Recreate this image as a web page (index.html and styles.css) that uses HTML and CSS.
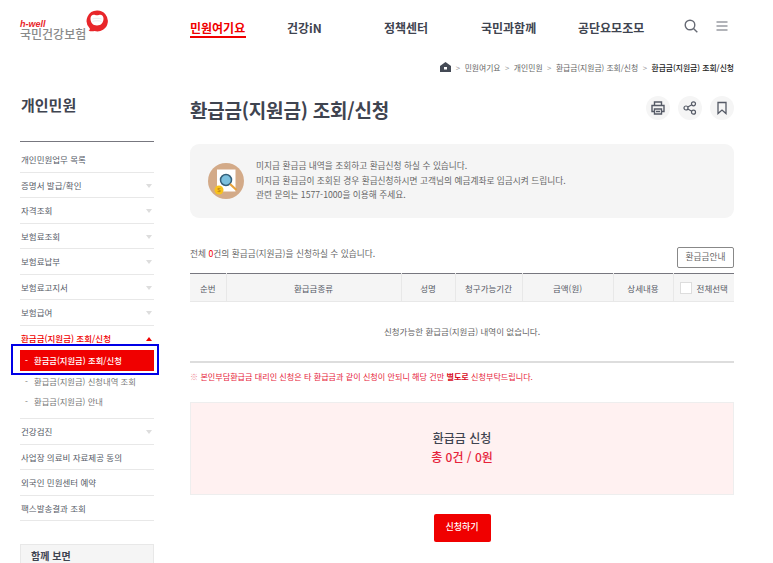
FILE: index.html
```html
<!DOCTYPE html>
<html lang="ko">
<head>
  <meta charset="UTF-8">
  <title>환급금(지원금) 조회/신청</title>
  <link rel="stylesheet" href="styles.css">
</head>
<body>
<div class="page">

  <header class="top">
    <a class="logo">
      <span class="logo-text">
        <em>h-well</em>
        <b>국민건강보험</b>
      </span>
      <svg class="logo-mark" width="22" height="22" viewBox="0 0 22 22">
        <path d="M11.5 0.5a10.500 10.500 0 1 1-3 20.600c-2 .4-4 .3-6-.3 1-.6 1.500-1.300 1.300-2.300a10.500 10.500 0 0 1 7.700-18z" fill="#e8262a"/>
        <path d="M4.500 8.500c0-2.300 1.500-3.800 3.200-3.800 1 0 1.800 .5 3.300 .5s2.300-.5 3.300-.5c1.700 0 3.200 1.500 3.200 3.800 0 4.200-2.300 7-6.500 7s-6.500-2.800-6.500-7z" fill="#fff"/>
        <path d="M6.500 9c1.500-1 7.500-1 9 0M6.500 11.500c1.500-1 7.500-1 9 0" stroke="#e4e4e8" stroke-width=".8" fill="none"/>
      </svg>
    </a>
    <nav class="gnb">
      <a class="on">민원여기요</a>
      <a>건강iN</a>
      <a>정책센터</a>
      <a>국민과함께</a>
      <a>공단요모조모</a>
    </nav>
    <div class="top-icons">
      <svg width="14" height="14" viewBox="0 0 14 14" fill="none" stroke="#666a74" stroke-width="1.400">
        <circle cx="6" cy="6" r="4.800"/><path d="M9.500 9.500l3.800 3.800"/>
      </svg>
      <svg width="12" height="10" viewBox="0 0 12 10" fill="none" stroke="#666a74" stroke-width="1.200">
        <path d="M.5 1h11M.5 5h11M.5 9h11"/>
      </svg>
    </div>
  </header>

  <div class="crumbs">
    <svg width="11" height="10" viewBox="0 0 11 10"><path d="M5.500 0L11 4v6H0V4z" fill="#444a55"/><rect x="4" y="5" width="3" height="2.500" fill="#fff"/></svg>
    <i>&gt;</i><span>민원여기요</span>
    <i>&gt;</i><span>개인민원</span>
    <i>&gt;</i><span>환급금(지원금) 조회/신청</span>
    <i>&gt;</i><strong>환급금(지원금) 조회/신청</strong>
  </div>

  <div class="body">
    <aside class="side">
      <h2>개인민원</h2>
      <ul class="menu">
        <li>개인민원업무 목록</li>
        <li class="arrow">증명서 발급/확인</li>
        <li class="arrow">자격조회</li>
        <li class="arrow">보험료조회</li>
        <li class="arrow">보험료납부</li>
        <li class="arrow">보험료고지서</li>
        <li class="arrow">보험급여</li>
        <li class="arrow open">환급금(지원금) 조회/신청</li>
        <li class="subs">
          <a class="sub cur">환급금(지원금) 조회/신청</a>
          <a class="sub">환급금(지원금) 신청내역 조회</a>
          <a class="sub">환급금(지원금) 안내</a>
        </li>
        <li class="arrow">건강검진</li>
        <li>사업장 의료비 자료제공 동의</li>
        <li>외국인 민원센터 예약</li>
        <li>팩스발송결과 조회</li>
      </ul>
      <div class="see-also">함께 보면</div>
      <div class="blue-box"></div>
    </aside>

    <main class="main">
      <div class="title-row">
        <h1>환급금(지원금) 조회/신청</h1>
        <div class="tools">
          <span class="tool">
            <svg width="14" height="14" viewBox="0 0 14 14" fill="none" stroke="#555a66" stroke-width="1.400">
              <path d="M3.500 4V1h7v3M3.500 10.500H1V4.500h12v6h-2.500"/><path d="M3.500 8h7v5h-7zM5 10.500h4"/>
            </svg>
          </span>
          <span class="tool">
            <svg width="14" height="14" viewBox="0 0 14 14" fill="none" stroke="#555a66" stroke-width="1.200">
              <circle cx="3" cy="7" r="2"/><circle cx="10.500" cy="2.800" r="2"/><circle cx="10.500" cy="11.200" r="2"/><path d="M4.800 6l4-2.300M4.800 8l4 2.300"/>
            </svg>
          </span>
          <span class="tool">
            <svg width="14" height="14" viewBox="0 0 14 14" fill="none" stroke="#555a66" stroke-width="1.300">
              <path d="M3 1.500h8v11l-4-3.500-4 3.500z"/>
            </svg>
          </span>
        </div>
      </div>

      <div class="notice">
        <svg class="notice-icon" width="36" height="36" viewBox="0 0 36 36">
          <circle cx="18" cy="18" r="18" fill="#d3aa88"/>
          <path d="M9 6.500h18.500v22H9z" fill="#fff"/>
          <circle cx="18" cy="17" r="5.500" fill="#7cc0de" stroke="#35607a" stroke-width="1.500"/>
          <path d="M22 21l6.500 6" stroke="#e9a33c" stroke-width="2.200"/>
          <circle cx="11" cy="27" r="4.500" fill="#f8c21c"/>
          <text x="11" y="29" font-size="6" text-anchor="middle" fill="#b57a10" font-family="Liberation Sans">$</text>
        </svg>
        <div class="notice-text">
          <p>미지급 환급금 내역을 조회하고 환급신청 하실 수 있습니다.</p>
          <p>미지급 환급금이 조회된 경우 환급신청하시면 고객님의 예금계좌로 입금시켜 드립니다.</p>
          <p>관련 문의는 1577-1000을 이용해 주세요.</p>
        </div>
      </div>

      <div class="count-row">
        <p>전체 <b>0</b>건의 환급금(지원금)을 신청하실 수 있습니다.</p>
        <a class="btn-guide">환급금안내</a>
      </div>

      <table class="list">
        <thead>
          <tr>
            <th class="c1">순번</th>
            <th class="c2">환급금종류</th>
            <th class="c3">성명</th>
            <th class="c4">청구가능기간</th>
            <th class="c5">금액(원)</th>
            <th class="c6">상세내용</th>
            <th class="c7"><span class="check-all"><span class="chk"></span>전체선택</span></th>
          </tr>
        </thead>
        <tbody>
          <tr><td colspan="7">신청가능한 환급금(지원금) 내역이 없습니다.</td></tr>
        </tbody>
      </table>

      <p class="warn"><span class="mark">※</span> 본인부담환급금 대리인 신청은 타 환급금과 같이 신청이 안되니 해당 건만 <b>별도로</b> 신청부탁드립니다.</p>

      <div class="total">
        <p>환급금 신청</p>
        <p class="sum">총 0건 / 0원</p>
      </div>

      <div class="submit-wrap"><a class="btn-submit">신청하기</a></div>
    </main>
  </div>

</div>
</body>
</html>
```

FILE: styles.css
```css
* {
  margin: 0;
  padding: 0;
  box-sizing: border-box;
}
html, body {
  height: 100%;
  overflow: hidden;
}
body {
  background: #fff;
  color: #555a66;
  font-family: "Noto Sans CJK KR", "Noto Sans", sans-serif;
  font-size: 9px;
}
.page {
  width: 773px;
  height: 563px;
  overflow: hidden;
  padding: 0 39px 0 20px;
}
ul {
  list-style: none;
}

/* top */
.top {
  display: flex;
  align-items: flex-start;
  height: 58px;
}
.logo {
  display: flex;
  align-items: flex-start;
  width: 170px;
  flex: none;
  padding-top: 10px;
}
.logo-text {
  display: flex;
  flex-direction: column;
  margin-top: 10px;
}
.logo-text em {
  color: #e8262a;
  font: italic bold 9px/8px "Liberation Sans", sans-serif;
}
.logo-text b {
  color: #8a8a8a;
  font-size: 12px;
  line-height: 12px;
  font-weight: 500;
}
.gnb {
  display: flex;
  flex: none;
  margin-top: 18px;
  width: 485px;
}
.gnb a {
  color: #3f4450;
  font-size: 12px;
  font-weight: 700;
  line-height: 20px;
  height: 21px;
  width: 97px;
  flex: none;
  white-space: nowrap;
}
.gnb a.on {
  color: #f00000;
  position: relative;
}
.gnb a.on::after {
  content: "";
  position: absolute;
  left: 0;
  top: 18px;
  width: 56px;
  height: 2px;
  background: #f00000;
}
.top-icons {
  display: flex;
  align-items: center;
  gap: 18px;
  margin: 19px 0 0 9px;
}

/* breadcrumb */
.crumbs {
  display: flex;
  justify-content: flex-end;
  align-items: center;
  gap: 4px;
  height: 18px;
  color: #666;
  font-size: 7.800px;
}
.crumbs i {
  font-style: normal;
  color: #999;
  margin: 0 .5px;
}
.crumbs strong {
  color: #222;
  font-weight: 500;
}

.body {
  display: flex;
  gap: 36px;
}

/* sidebar */
.side {
  width: 134px;
  flex: none;
  position: relative;
}
.side h2 {
  color: #3f4450;
  font-size: 15px;
  font-weight: 700;
  line-height: 22px;
  margin-top: 18px;
  height: 48px;
  border-bottom: 1px solid #77777f;
  padding-left: 1px;
}
.menu li {
  border-bottom: 1px solid #e8e8e8;
  font-size: 8.500px;
  line-height: 24.500px;
  padding-left: 1px;
  color: #555a66;
  position: relative;
}
.menu li:first-child {
  margin-top: 5px;
}
.menu li.arrow::after {
  content: "";
  position: absolute;
  right: 2px;
  top: 11px;
  border: 3px solid transparent;
  border-top: 4px solid #dddddd;
  border-bottom: 0;
}
.menu li.open {
  color: #f00000;
  font-weight: 500;
  border-bottom: 0;
}
.menu li.open::after {
  border-top: 0;
  border-bottom: 4px solid #f00000;
}
.menu li.subs {
  padding: 0 0 7px;
}
.sub {
  display: block;
  position: relative;
  padding-left: 14px;
  height: 20px;
  font-size: 8.300px;
  line-height: 20px;
  color: #777;
  white-space: nowrap;
}
.sub::before {
  content: "-";
  position: absolute;
  left: 5px;
}
.sub.cur {
  background: #f00000;
  color: #fff;
  font-weight: 500;
  height: 21px;
  line-height: 21px;
}
.blue-box {
  position: absolute;
  left: -9px;
  top: 268px;
  width: 148px;
  height: 31px;
  border: 2px solid #0000e6;
}
.see-also {
  margin-top: 22.500px;
  height: 40px;
  padding: 4px 10px;
  background: #f5f5f5;
  border: 1px solid #e8e8e8;
  color: #3f4450;
  font-size: 10px;
  line-height: 14px;
  font-weight: 700;
}

/* main */
.main {
  width: 544px;
  flex: none;
}
.title-row {
  display: flex;
  justify-content: space-between;
  align-items: center;
  height: 24px;
  margin-top: 20px;
}
.title-row h1 {
  color: #3f4450;
  font-size: 19px;
  font-weight: 700;
  letter-spacing: -.2px;
  padding-top: 2px;
}
.tools {
  display: flex;
  gap: 8px;
}
.tool {
  display: flex;
  align-items: center;
  justify-content: center;
  width: 24px;
  height: 24px;
  border-radius: 50%;
  background: #f5f5f5;
}
.notice {
  display: flex;
  align-items: center;
  gap: 12px;
  height: 74px;
  margin-top: 24px;
  padding-left: 18px;
  background: #f5f5f5;
  border-radius: 9px;
}
.notice-text {
  font-size: 8.700px;
  line-height: 14.500px;
  color: #666;
}
.count-row {
  display: flex;
  justify-content: space-between;
  align-items: flex-end;
  margin-top: 29px;
  height: 21px;
  font-size: 8.700px;
  color: #666;
}
.count-row p {
  padding-bottom: 8px;
}
.count-row b {
  color: #f00000;
  font-weight: 400;
}
.btn-guide {
  width: 57px;
  height: 21px;
  border: 1px solid #888;
  border-radius: 2px;
  line-height: 18px;
  text-align: center;
}
.list {
  width: 100%;
  margin-top: 5px;
  border-collapse: collapse;
  table-layout: fixed;
  border-top: 1px solid #77777f;
  border-bottom: 2px solid #ddd;
  font-size: 8.500px;
}
.list th {
  height: 28px;
  background: #f5f5f5;
  border-left: 1px solid #e8e8e8;
  border-bottom: 1px solid #e8e8e8;
  font-weight: 400;
  color: #555a66;
}
.list th:first-child {
  border-left: 0;
}
.c1 { width: 36px; }
.c2 { width: 175px; }
.c3 { width: 54px; }
.c4 { width: 67px; }
.c5 { width: 91px; }
.c6 { width: 60px; }
.check-all {
  display: flex;
  align-items: center;
  justify-content: center;
  gap: 5px;
}
.chk {
  width: 12px;
  height: 12px;
  background: #fff;
  border: 1px solid #ddd;
}
.list td {
  height: 60px;
  text-align: center;
  color: #666;
}
.warn {
  margin-top: 7px;
  color: #e6233a;
  font-size: 8.100px;
  line-height: 14px;
  white-space: nowrap;
}
.warn .mark {
  color: #ee8a96;
}
.warn b {
  color: #d80a24;
  font-weight: 700;
}
.total {
  height: 93px;
  margin-top: 18px;
  padding-top: 25px;
  background: #fff1f1;
  border: 1px solid #eee;
  text-align: center;
  color: #3f4450;
  font-size: 12px;
  font-weight: 500;
  line-height: 19px;
}
.total .sum {
  color: #e6233a;
}
.submit-wrap {
  display: flex;
  justify-content: center;
  margin-top: 19px;
}
.btn-submit {
  width: 57px;
  height: 28px;
  background: #f00000;
  border-radius: 2px;
  color: #fff;
  font-size: 9px;
  font-weight: 500;
  line-height: 26px;
  text-align: center;
}
```
